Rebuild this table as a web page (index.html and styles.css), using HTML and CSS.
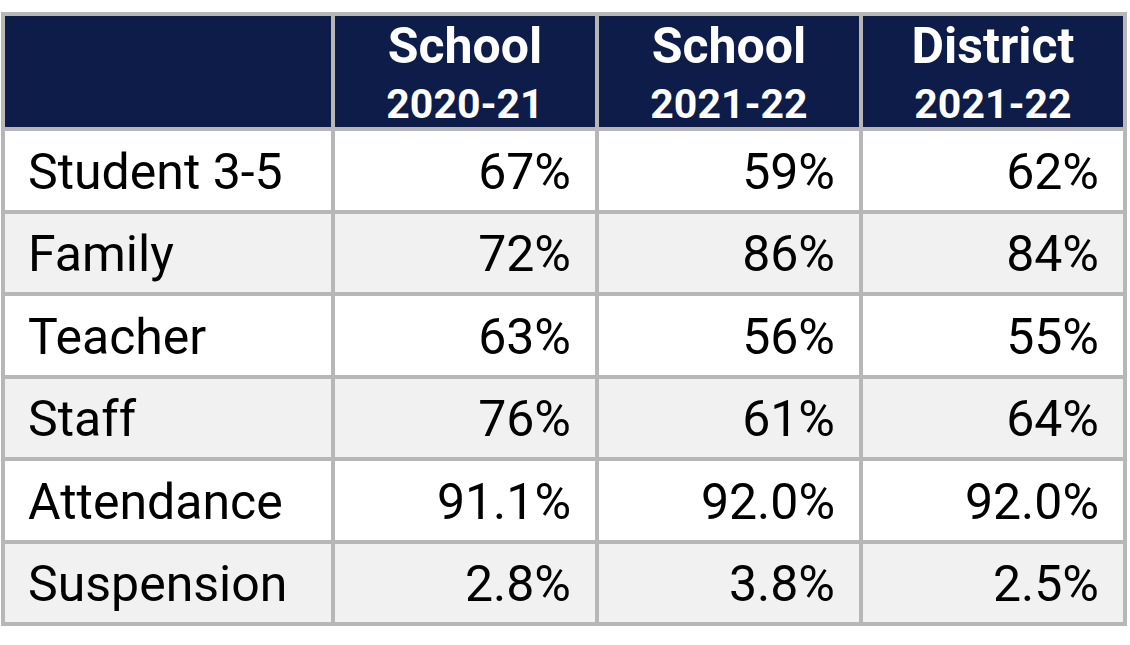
FILE: index.html
```html
<!DOCTYPE html>
<html lang="en">
<head>
<meta charset="utf-8">
<title>School Climate Survey</title>
<link rel="stylesheet" href="styles.css">
</head>
<body>
<table class="data">
  <colgroup>
    <col class="c-label">
    <col class="c-val">
    <col class="c-val">
    <col class="c-val">
  </colgroup>
  <thead>
    <tr>
      <th class="corner"></th>
      <th><span class="h1">School</span><span class="h2">2020-21</span></th>
      <th><span class="h1">School</span><span class="h2">2021-22</span></th>
      <th><span class="h1">District</span><span class="h2">2021-22</span></th>
    </tr>
  </thead>
  <tbody>
    <tr class="odd"><td class="label">Student 3-5</td><td>67%</td><td>59%</td><td>62%</td></tr>
    <tr class="even"><td class="label">Family</td><td>72%</td><td>86%</td><td>84%</td></tr>
    <tr class="odd"><td class="label">Teacher</td><td>63%</td><td>56%</td><td>55%</td></tr>
    <tr class="even"><td class="label">Staff</td><td>76%</td><td>61%</td><td>64%</td></tr>
    <tr class="odd"><td class="label">Attendance</td><td>91.1%</td><td>92.0%</td><td>92.0%</td></tr>
    <tr class="even"><td class="label">Suspension</td><td>2.8%</td><td>3.8%</td><td>2.5%</td></tr>
  </tbody>
</table>
</body>
</html>
```
FILE: styles.css
```css
html, body {
  margin: 0;
  padding: 0;
  background: #ffffff;
}

body {
  font-family: Roboto, "Liberation Sans", Arial, sans-serif;
  color: #000000;
}

.data {
  margin: 12px 0 0 1px;
  width: 1126px;
  table-layout: fixed;
  border-collapse: separate;
  border-spacing: 4px;
  background: #b7b7b7;
}

.c-label { width: 326px; }
.c-val { width: 260px; }

.data th {
  background: #0e1c4a;
  color: #ffffff;
  font-weight: 700;
  height: 111px;
  padding: 5px 0 0;
  box-sizing: border-box;
  vertical-align: top;
  text-align: center;
}

.h1 {
  display: block;
  font-size: 50px;
  line-height: 50px;
}

.h2 {
  display: block;
  font-size: 41px;
  line-height: 41px;
  margin-top: 12.5px;
}

.data td {
  height: 78.5px;
  padding: 3px 24px 0 23px;
  box-sizing: border-box;
  font-size: 50px;
  vertical-align: middle;
  text-align: right;
  white-space: nowrap;
}

.data td.label {
  text-align: left;
}

.odd td { background: #ffffff; }
.even td { background: #f1f1f1; }
```
